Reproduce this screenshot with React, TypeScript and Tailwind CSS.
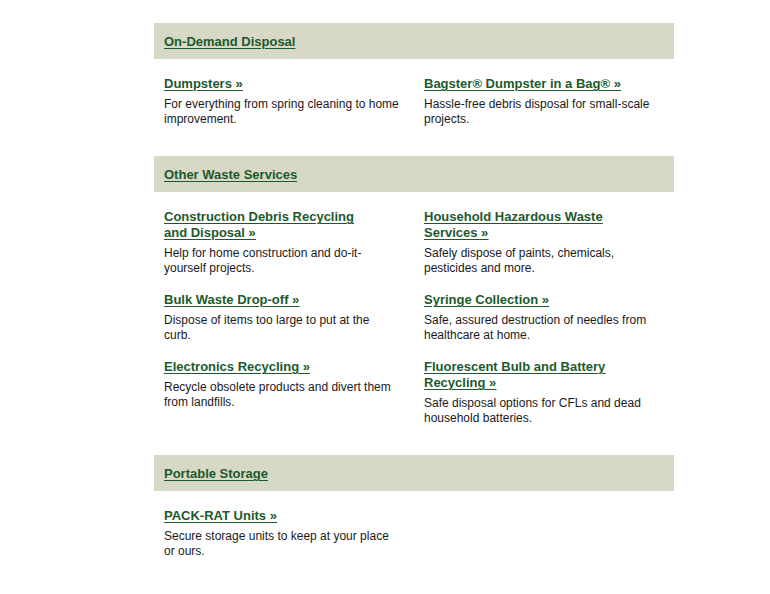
import React from "react";

type Item = { title: string[]; desc: string[] };
type Section = { heading: string; rows: Item[][] };

const sections: Section[] = [
  {
    heading: "On-Demand Disposal",
    rows: [
      [
        { title: ["Dumpsters »"], desc: ["For everything from spring cleaning to home", "improvement."] },
        { title: ["Bagster® Dumpster in a Bag® »"], desc: ["Hassle-free debris disposal for small-scale", "projects."] },
      ],
    ],
  },
  {
    heading: "Other Waste Services",
    rows: [
      [
        { title: ["Construction Debris Recycling", "and Disposal »"], desc: ["Help for home construction and do-it-", "yourself projects."] },
        { title: ["Household Hazardous Waste", "Services »"], desc: ["Safely dispose of paints, chemicals,", "pesticides and more."] },
      ],
      [
        { title: ["Bulk Waste Drop-off »"], desc: ["Dispose of items too large to put at the", "curb."] },
        { title: ["Syringe Collection »"], desc: ["Safe, assured destruction of needles from", "healthcare at home."] },
      ],
      [
        { title: ["Electronics Recycling »"], desc: ["Recycle obsolete products and divert them", "from landfills."] },
        { title: ["Fluorescent Bulb and Battery", "Recycling »"], desc: ["Safe disposal options for CFLs and dead", "household batteries."] },
      ],
    ],
  },
  {
    heading: "Portable Storage",
    rows: [
      [
        { title: ["PACK-RAT Units »"], desc: ["Secure storage units to keep at your place", "or ours."] },
      ],
    ],
  },
];

function Cell({ item }: { item?: Item }) {
  if (!item) return <div />;
  return (
    <div className="pl-[10px]">
      <a
        href="#"
        className="block text-[13px] leading-[16px] font-bold text-[#1c5a2c] underline underline-offset-[2px] decoration-1"
      >
        {item.title.map((t, i) => (
          <span key={i} className="block whitespace-nowrap">
            <span className="underline">{t}</span>
          </span>
        ))}
      </a>
      <p className="mt-[5px] text-[12px] leading-[15px] text-[#1a1a1a]">
        {item.desc.map((d, i) => (
          <span key={i} className="block whitespace-nowrap">
            {d}
          </span>
        ))}
      </p>
    </div>
  );
}

export default function App() {
  return (
    <div
      className="min-h-[594px] bg-white pt-[23px]"
      style={{ fontFamily: '"Liberation Sans", Arial, sans-serif' }}
    >
      <div className="ml-[154px] w-[520px]">
        {sections.map((s) => (
          <section key={s.heading} className="pb-[29px]">
            <div className="flex h-9 items-center bg-[#d8d8c6] px-[10px] pt-[2px]">
              <a
                href="#"
                className="text-[13px] leading-[16px] font-bold text-[#1c5a2c] underline underline-offset-[2px] decoration-1"
              >
                {s.heading}
              </a>
            </div>
            <div className="grid grid-cols-2 gap-y-[16px] pt-[17px]">
              {s.rows.flatMap((row, ri) => [
                <Cell key={`${ri}-0`} item={row[0]} />,
                <Cell key={`${ri}-1`} item={row[1]} />,
              ])}
            </div>
          </section>
        ))}
      </div>
    </div>
  );
}
